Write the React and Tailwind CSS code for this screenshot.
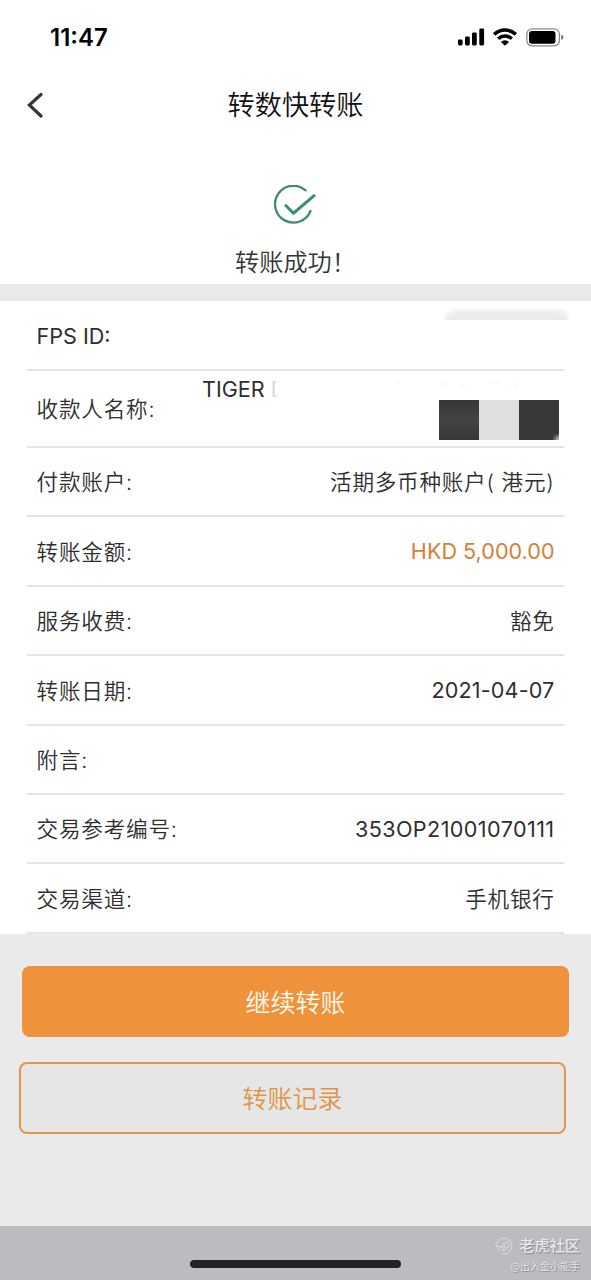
import clsx from "clsx";

const rows = [
  { label: "付款账户:", value: "活期多币种账户( 港元)", style: "tracking-[0.75px]" },
  { label: "转账金额:", value: "HKD 5,000.00", style: "font-normal tracking-[0px] text-[#d87d36] -mt-[2px]" },
  { label: "服务收费:", value: "豁免", style: "tracking-[0.6px]" },
  { label: "转账日期:", value: "2021-04-07", style: "font-normal tracking-[0.15px] -mt-[2px]" },
  { label: "附言:", value: "" },
  { label: "交易参考编号:", value: "353OP21001070111", style: "font-normal tracking-[0.4px]" },
  { label: "交易渠道:", value: "手机银行", style: "tracking-[0.7px]" },
];

const StatusBar = () => (
  <div className="flex h-[74px] items-center justify-between pl-[50px] pr-[27px]">
    <span className="pt-px text-[24px] font-semibold text-black">11:47</span>
    <div className="flex items-center">
      <svg className="h-[18px] w-[27px]" viewBox="0 0 27 18" fill="black">
        <rect x="0" y="11.5" width="4.6" height="6" rx="1.4" />
        <rect x="7" y="8.5" width="4.8" height="9" rx="1.4" />
        <rect x="14" y="4.5" width="4.8" height="13" rx="1.4" />
        <rect x="21.3" y="0.5" width="4.8" height="17" rx="1.4" />
      </svg>
      <svg className="ml-[8px] h-[18px] w-[24px]" viewBox="0 0 24 18" fill="none" stroke="black">
        <path d="M1.2 6.4 A15.6 15.6 0 0 1 22.8 6.4" strokeWidth="3.6" />
        <path d="M5.2 10.7 A10 10 0 0 1 18.8 10.7" strokeWidth="3.4" />
        <path d="M12 17.8 L8 14 A5.6 5.6 0 0 1 16 14 Z" fill="black" stroke="none" />
      </svg>
      <svg className="ml-[9px] h-[19px] w-[38px]" viewBox="0 0 38 19" fill="none">
        <rect x="0.8" y="0.8" width="32.6" height="17" rx="5.4" stroke="#8a8a8a" strokeWidth="1.3" />
        <rect x="3" y="3" width="26.5" height="12.8" rx="3" fill="black" />
        <path d="M35.2 6.5 Q37.4 7.3 37.4 9.3 Q37.4 11.3 35.2 12.1 Z" fill="#777" />
      </svg>
    </div>
  </div>
);

const Header = () => (
  <div className="grid h-[62px] grid-cols-[60px_1fr_60px] items-center">
    <svg className="ml-[26px] h-[26px] w-[18px]" viewBox="0 0 18 26" fill="none" stroke="#363636" strokeWidth="3.2" strokeLinecap="round">
      <path d="M15 2.5 L3.4 13 L15 24" />
    </svg>
    <h1 className="pt-[2px] text-center text-[27.2px] leading-none text-[#111]">转数快转账</h1>
  </div>
);

const Success = () => (
  <div className="flex h-[148px] flex-col items-center pt-[49px]">
    <svg className="h-[42px] w-[44px]" viewBox="0 0 44 42" fill="none" stroke="#3b8f68" strokeLinecap="round">
      <path d="M31.6 5.4 A18.4 18.4 0 1 0 36.5 26" strokeWidth="2.3" />
      <path d="M11 19.8 L19.5 28.2 L41 9.8" strokeWidth="3" strokeLinecap="butt" />
    </svg>
    <p className="mt-[24px] text-[24.2px] leading-none text-[#333]">转账成功！</p>
  </div>
);

const Row = ({ label, value, style }) => (
  <li className="flex h-[69.4px] items-center justify-between border-b-2 border-[#e5e5e5] pl-[9.5px] pr-[9.5px] pt-[3px] text-[21.6px] leading-none">
    <span className="tracking-[0.8px]">{label}</span>
    <span className={clsx("block", style)}>{value}</span>
  </li>
);

// payee details are partly wiped out and covered with mosaic blocks
const PayeeRow = () => (
  <li className="relative flex h-[77px] items-center border-b-2 border-[#e5e5e5] pl-[9.5px] pt-[2px] text-[21.6px] leading-none">
    <span className="tracking-[0.8px]">收款人名称:</span>
    <span className="absolute left-[175px] top-[8px] flex font-normal">
      TIGER
      <span className="ml-[6px] text-[#d4d4d4] [mask-image:linear-gradient(to_right,black_20%,transparent_50%)]">D</span>
    </span>
    <svg className="absolute left-[368px] top-[10px] h-[8px] w-[130px]" viewBox="0 0 130 8" fill="none" stroke="#f6f6f6" strokeWidth="1.4">
      <path d="M2 2 L5 2 M46 3 H52 M66 4 H70 M96 3 Q100 0 105 3 M112 5 H114 M121 2 V7" />
    </svg>
    <div className="absolute left-[412px] top-[29px] flex h-[40px] w-[120px]">
      <div className="flex-1 bg-linear-to-b from-[#353535] via-[#444] to-[#363636]" />
      <div className="flex-1 bg-[#dfdfdf]" />
      <div className="flex-1 bg-[radial-gradient(circle_at_bottom_right,#ccc_0,#383838_7px)]" />
    </div>
  </li>
);

const Watermark = () => (
  <div className="absolute right-[11px] top-[9px] flex flex-col items-end text-[#e9e9ec] [text-shadow:1px_1px_1px_#85858a]">
    <div className="flex items-center gap-[6px]">
      <svg className="h-[18px] w-[18px]" viewBox="0 0 18 18" fill="none" stroke="#dededf" strokeWidth="1">
        <path d="M1 10 A8 8 0 1 1 7 16.8" />
        <path d="M1.2 9.5 Q5 8.6 7.5 10 Q6 7 10 6.5 Q13 6 14 3.5 M4 10 V14 M7.5 10 V13.5 Q10 14 12.5 10.5 L14.5 7.5 M10 8.5 V11" />
      </svg>
      <span className="pt-px text-[15.2px] font-medium leading-[20px]">老虎社区</span>
    </div>
    <span className="mt-[4px] text-[10px] leading-[12px]">@出入金小能手</span>
  </div>
);

export default function App() {
  return (
    <div className="flex h-[1280px] w-[591px] flex-col overflow-hidden bg-white font-['Inter','Noto_Sans_CJK_SC',sans-serif] font-[350] text-[#2e2e2e]">
      <StatusBar />
      <Header />
      <Success />
      <div className="h-[17px] bg-[#e9e9e9]" />
      <ul className="px-[27px]">
        <li className="relative flex h-[70px] items-center border-b-2 border-[#e5e5e5] pl-[9.5px] pt-[3px] text-[21.6px] font-normal leading-none">
          FPS ID:
          <div className="absolute left-[412px] top-[4px] h-[15px] w-[136px] overflow-hidden">
            <div className="ml-[6px] mt-[5px] h-[24px] w-[124px] rounded-[20px] bg-[#ebebeb] blur-[2.5px]" />
          </div>
        </li>
        <PayeeRow />
        {rows.map((row) => (
          <Row key={row.label} {...row} />
        ))}
      </ul>
      <div className="flex flex-1 flex-col bg-[#eaeaea] pt-[32px]">
        <button className="ml-[22px] h-[71px] w-[547px] rounded-[8px] bg-[#ee923b] pt-[5px] text-[25px] text-[#fffaf0]">继续转账</button>
        <button className="ml-[19px] mt-[25px] h-[72px] w-[547px] rounded-[8px] border-2 border-[#e19650] bg-[#e6e6e6] pt-[4px] text-[25px] text-[#e19445]">转账记录</button>
      </div>
      <div className="relative flex h-[54px] items-end justify-center bg-[#bcbbc0] pb-[12px]">
        <div className="h-[8px] w-[211px] rounded-full bg-[#222226]" />
        <Watermark />
      </div>
    </div>
  );
}
